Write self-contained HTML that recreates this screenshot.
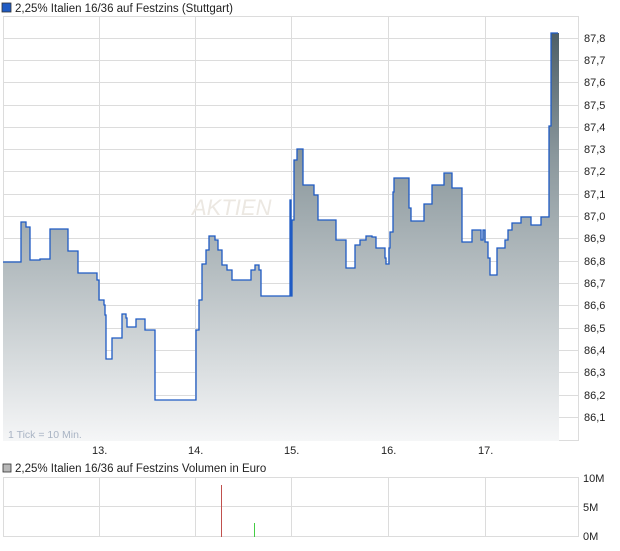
<!DOCTYPE html>
<html><head><meta charset="utf-8"><style>
html,body{margin:0;padding:0;background:#fff;}
body{width:620px;height:546px;overflow:hidden;font-family:"Liberation Sans",sans-serif;}
</style></head><body>
<svg width="620" height="546" xmlns="http://www.w3.org/2000/svg" font-family="Liberation Sans, sans-serif">
<defs>
<linearGradient id="g" gradientUnits="userSpaceOnUse" x1="0" y1="33" x2="0" y2="441">
<stop offset="0" stop-color="#4d5f66"/><stop offset="0.3" stop-color="#8a979c"/><stop offset="1" stop-color="#f5f6f7"/>
</linearGradient>
</defs>
<rect x="2" y="3" width="9" height="9" fill="#1f5bc4" stroke="#333" stroke-width="0.8"/>
<text x="15" y="12" font-size="11.5" fill="#222">2,25% Italien 16/36 auf Festzins (Stuttgart)</text>
<g stroke="#dcdcdc" stroke-width="1">
<rect x="3.5" y="16.5" width="575" height="424" fill="none"/>
<path d="M99.5 16V441M195.5 16V441M291.5 16V441M388.5 16V441M485.5 16V441"/>
<path d="M3 38.5H578M3 60.5H578M3 82.5H578M3 105.5H578M3 127.5H578M3 149.5H578M3 171.5H578M3 194.5H578M3 216.5H578M3 238.5H578M3 261.5H578M3 283.5H578M3 305.5H578M3 328.5H578M3 350.5H578M3 372.5H578M3 395.5H578M3 417.5H578"/>
</g>
<text x="192" y="215" font-size="22" font-style="italic" fill="#ece8e2">AKTIEN</text>
<path d="M3 262H21V222H26V227H30V260H40V259H50V229H68V251H78V273H97V280H99V300H104V305H105V315H106V359H112V338H122V314H126V318H127V327H136V319H145V330H155V400H196V330H199V300H202V264H206V250H209V236H215V240H218V250H222V265H227V270H232V280H251V270H255V265H259V270H261V296H290V200H291V296H292V220H294V160H297V149H303V185H314V195H318V220H336V240H346V268H355V245H360V240H366V236H372V237H376V248H385V258H386V264H389V248H390V232H393V192H394V178H409V208H411V221H424V204H432V185H444V173H452V188H462V242H472V230H481V240H483V230H485V242H488V258H490V275H497V248H505V240H508V230H512V223H521V217H531V225H541V217H549V126H551V33H559V441H3Z" fill="url(#g)" stroke="none"/>
<path d="M3 262H21V222H26V227H30V260H40V259H50V229H68V251H78V273H97V280H99V300H104V305H105V315H106V359H112V338H122V314H126V318H127V327H136V319H145V330H155V400H196V330H199V300H202V264H206V250H209V236H215V240H218V250H222V265H227V270H232V280H251V270H255V265H259V270H261V296H290V200H291V296H292V220H294V160H297V149H303V185H314V195H318V220H336V240H346V268H355V245H360V240H366V236H372V237H376V248H385V258H386V264H389V248H390V232H393V192H394V178H409V208H411V221H424V204H432V185H444V173H452V188H462V242H472V230H481V240H483V230H485V242H488V258H490V275H497V248H505V240H508V230H512V223H521V217H531V225H541V217H549V126H551V33H558" fill="none" stroke="#1f5bc4" stroke-width="1.3"/>
<g font-size="11" fill="#222">
<text x="584" y="42">87,8</text><text x="584" y="64">87,7</text><text x="584" y="86">87,6</text><text x="584" y="109">87,5</text><text x="584" y="131">87,4</text><text x="584" y="153">87,3</text><text x="584" y="175">87,2</text><text x="584" y="198">87,1</text><text x="584" y="220">87,0</text><text x="584" y="242">86,9</text><text x="584" y="265">86,8</text><text x="584" y="287">86,7</text><text x="584" y="309">86,6</text><text x="584" y="332">86,5</text><text x="584" y="354">86,4</text><text x="584" y="376">86,3</text><text x="584" y="399">86,2</text><text x="584" y="421">86,1</text>
<text x="92" y="454">13.</text><text x="188" y="454">14.</text><text x="284" y="454">15.</text><text x="381" y="454">16.</text><text x="478" y="454">17.</text>
</g>
<text x="8" y="438" font-size="10.5" fill="#a9b4c4">1 Tick = 10 Min.</text>
<rect x="3" y="464" width="8" height="8" fill="#b8b8b8" stroke="#333" stroke-width="0.8"/>
<text x="15" y="472" font-size="11.5" fill="#222">2,25% Italien 16/36 auf Festzins Volumen in Euro</text>
<g stroke="#dcdcdc" stroke-width="1">
<rect x="3.5" y="477.5" width="575" height="59" fill="none"/>
<path d="M3 506.5H578M99.5 477V537M195.5 477V537M291.5 477V537M388.5 477V537M485.5 477V537"/>
</g>
<rect x="221" y="485" width="1" height="52" fill="#c0504d"/>
<rect x="254" y="523" width="1" height="14" fill="#44cc44"/>
<g font-size="11" fill="#222"><text x="583" y="482">10M</text><text x="583" y="511">5M</text><text x="583" y="540">0M</text></g>
</svg>
</body></html>
